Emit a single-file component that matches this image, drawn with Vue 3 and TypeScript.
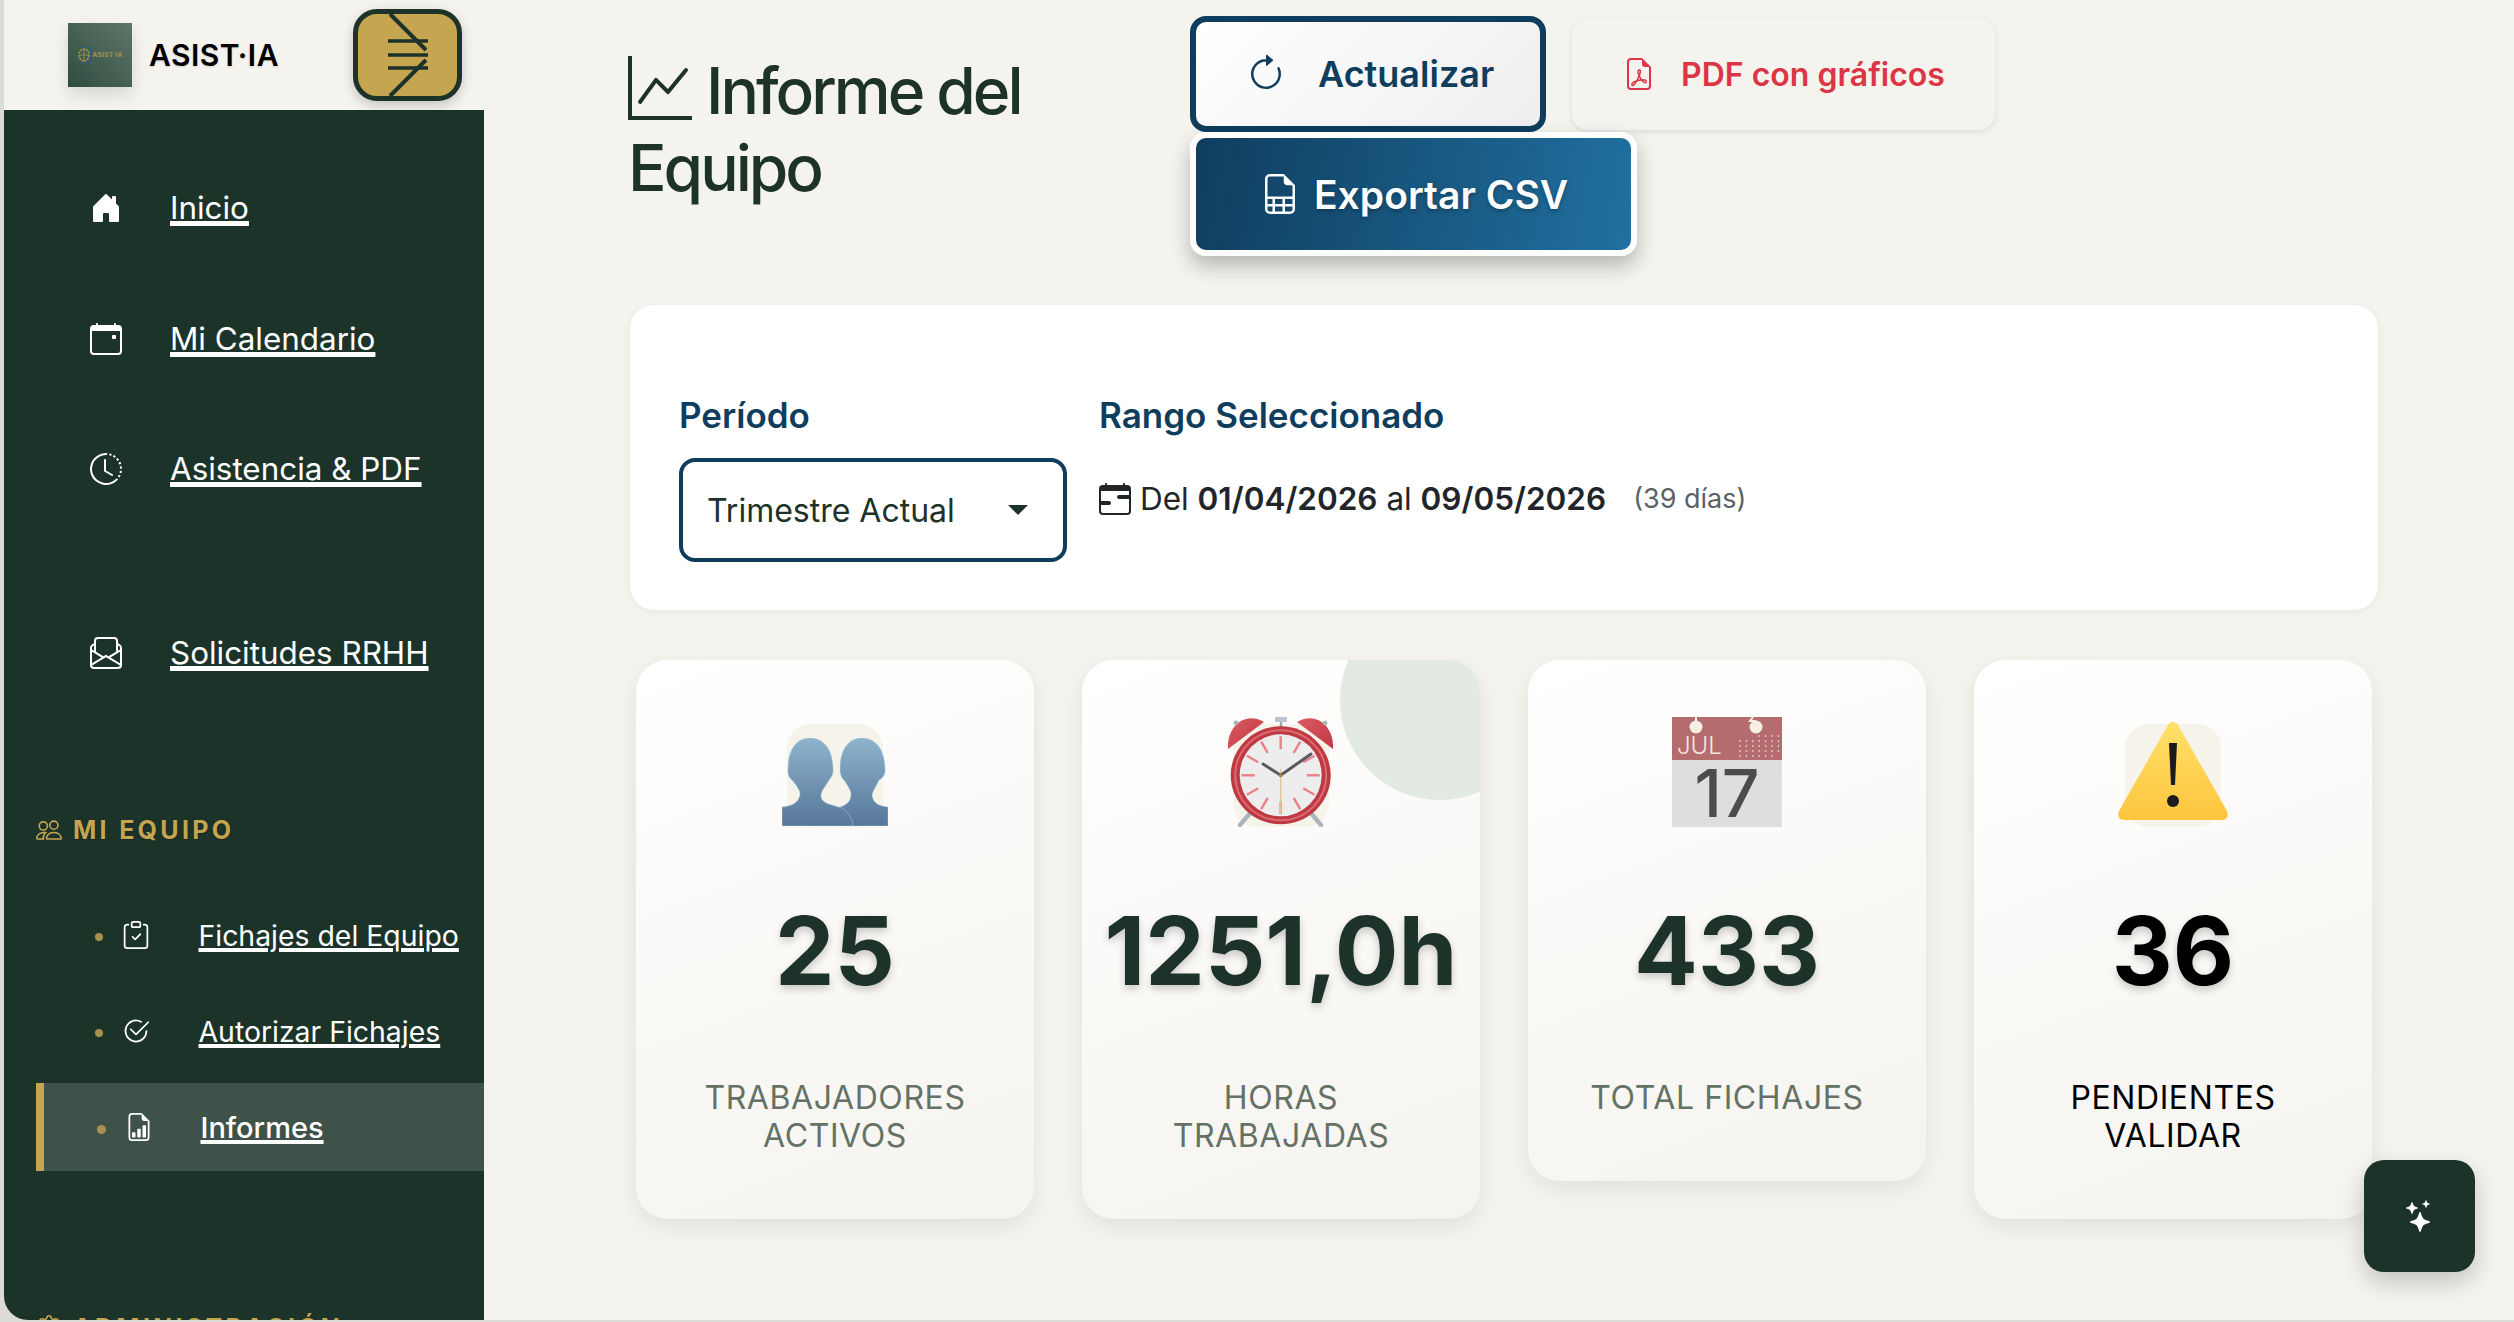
<script setup lang="ts">
const icons: Record<string, string> = {
  home: 'M6.5 14.5v-3.505c0-.245.25-.495.5-.495h2c.25 0 .5.25.5.5v3.5a.5.5 0 0 0 .5.5h4a.5.5 0 0 0 .5-.5v-7a.5.5 0 0 0-.146-.354L13 5.793V2.5a.5.5 0 0 0-.5-.5h-1a.5.5 0 0 0-.5.5v1.293L8.354 1.146a.5.5 0 0 0-.708 0l-6 6A.5.5 0 0 0 1.5 7.5v7a.5.5 0 0 0 .5.5h4a.5.5 0 0 0 .5-.5',
  calendar: 'M11 6.5a.5.5 0 0 1 .5-.5h1a.5.5 0 0 1 .5.5v1a.5.5 0 0 1-.5.5h-1a.5.5 0 0 1-.5-.5zM3.5 0a.5.5 0 0 1 .5.5V1h8V.5a.5.5 0 0 1 1 0V1h1a2 2 0 0 1 2 2v11a2 2 0 0 1-2 2H2a2 2 0 0 1-2-2V3a2 2 0 0 1 2-2h1V.5a.5.5 0 0 1 .5-.5M1 4v10a1 1 0 0 0 1 1h12a1 1 0 0 0 1-1V4z',
  clock: 'M8.515 1.019A7 7 0 0 0 8 1V0a8 8 0 0 1 .589.022zm2.004.45a7 7 0 0 0-.985-.299l.219-.976q.576.129 1.126.342zm1.37.71a7 7 0 0 0-.439-.27l.493-.87a8 8 0 0 1 .979.654l-.615.789a7 7 0 0 0-.418-.302zm1.834 1.79a7 7 0 0 0-.653-.796l.724-.69q.406.429.747.91zm.744 1.352a7 7 0 0 0-.214-.468l.893-.45a8 8 0 0 1 .45 1.088l-.95.313a7 7 0 0 0-.179-.483m.53 2.507a7 7 0 0 0-.1-1.025l.985-.17q.1.58.116 1.17zm-.131 1.538q.05-.254.081-.51l.993.123a8 8 0 0 1-.23 1.155l-.964-.267q.069-.247.12-.501m-.952 2.379q.276-.436.486-.908l.914.405q-.24.54-.555 1.038zm-.964 1.205q.183-.183.35-.378l.758.653a8 8 0 0 1-.401.432zM8 1a7 7 0 1 0 4.95 11.95l.707.707A8.001 8.001 0 1 1 8 0zM7.5 3a.5.5 0 0 1 .5.5v5.21l3.248 1.856a.5.5 0 0 1-.496.868l-3.5-2A.5.5 0 0 1 7 9V3.5a.5.5 0 0 1 .5-.5',
  envelope: 'M4 0a2 2 0 0 0-2 2v1.133l-.941.502A2 2 0 0 0 0 5.4V14a2 2 0 0 0 2 2h12a2 2 0 0 0 2-2V5.4a2 2 0 0 0-1.059-1.765L14 3.133V2a2 2 0 0 0-2-2zm10 4.267.47.25A1 1 0 0 1 15 5.4v.817l-1 .6zm-1 3.15-3.75 2.25L8 8.917l-1.25.75L3 7.417V2a1 1 0 0 1 1-1h8a1 1 0 0 1 1 1zm-11-.6-1-.6V5.4a1 1 0 0 1 .53-.882L2 4.267zm13 .566v5.734l-4.778-2.867zm-.035 6.88A1 1 0 0 1 14 15H2a1 1 0 0 1-.965-.738L8 10.083zM1 13.116V7.383l4.778 2.867L1 13.117Z',
  people: 'M15 14s1 0 1-1-1-4-5-4-5 3-5 4 1 1 1 1zm-7.978-1L7 12.996c.001-.264.167-1.03.76-1.72C8.312 10.629 9.282 10 11 10c1.717 0 2.687.63 3.24 1.276.593.69.758 1.457.76 1.72l-.008.002-.014.002zM11 7a2 2 0 1 0 0-4 2 2 0 0 0 0 4m3-2a3 3 0 1 1-6 0 3 3 0 0 1 6 0M6.936 9.28a6 6 0 0 0-1.23-.247A7 7 0 0 0 5 9c-4 0-5 3-5 4q0 1 1 1h4.216A2.24 2.24 0 0 1 5 13c0-1.01.377-2.042 1.09-2.904.243-.294.526-.569.846-.816M4.92 10A5.5 5.5 0 0 0 4 13H1c0-.26.164-1.03.76-1.724.545-.636 1.492-1.256 3.16-1.275ZM1.5 5.5a3 3 0 1 1 6 0 3 3 0 0 1-6 0m3-2a2 2 0 1 0 0 4 2 2 0 0 0 0-4',
  clipboard: 'M10.854 7.146a.5.5 0 0 1 0 .708l-3 3a.5.5 0 0 1-.708 0l-1.5-1.5a.5.5 0 1 1 .708-.708L7.5 9.793l2.646-2.647a.5.5 0 0 1 .708 0M4 1.5H3a2 2 0 0 0-2 2V14a2 2 0 0 0 2 2h10a2 2 0 0 0 2-2V3.5a2 2 0 0 0-2-2h-1v1h1a1 1 0 0 1 1 1V14a1 1 0 0 1-1 1H3a1 1 0 0 1-1-1V3.5a1 1 0 0 1 1-1h1zM9.5 1a.5.5 0 0 1 .5.5v1a.5.5 0 0 1-.5.5h-3a.5.5 0 0 1-.5-.5v-1a.5.5 0 0 1 .5-.5zm-3-1A1.5 1.5 0 0 0 5 1.5v1A1.5 1.5 0 0 0 6.5 4h3A1.5 1.5 0 0 0 11 2.5v-1A1.5 1.5 0 0 0 9.5 0z',
  check: 'M2.5 8a5.5 5.5 0 0 1 8.25-4.764.5.5 0 0 0 .5-.866A6.5 6.5 0 1 0 14.5 8a.5.5 0 0 0-1 0 5.5 5.5 0 1 1-11 0M15.354 3.354a.5.5 0 0 0-.708-.708L8 9.293 5.354 6.646a.5.5 0 1 0-.708.708l3 3a.5.5 0 0 0 .708 0z',
  report: 'M10 13.5a.5.5 0 0 0 .5.5h1a.5.5 0 0 0 .5-.5v-6a.5.5 0 0 0-.5-.5h-1a.5.5 0 0 0-.5.5zm-2.5.5a.5.5 0 0 1-.5-.5v-4a.5.5 0 0 1 .5-.5h1a.5.5 0 0 1 .5.5v4a.5.5 0 0 1-.5.5zm-3 0a.5.5 0 0 1-.5-.5v-2a.5.5 0 0 1 .5-.5h1a.5.5 0 0 1 .5.5v2a.5.5 0 0 1-.5.5zM14 14V4.5L9.5 0H4a2 2 0 0 0-2 2v12a2 2 0 0 0 2 2h8a2 2 0 0 0 2-2M9.5 3A1.5 1.5 0 0 0 11 4.5h2V14a1 1 0 0 1-1 1H4a1 1 0 0 1-1-1V2a1 1 0 0 1 1-1h5.5z',
  graph: 'M0 0h1v15h15v1H0zm14.817 3.113a.5.5 0 0 1 .07.704l-4.5 5.5a.5.5 0 0 1-.74.037L7.06 6.767l-3.656 5.027a.5.5 0 0 1-.808-.588l4-5.5a.5.5 0 0 1 .758-.06l2.609 2.61 4.15-5.073a.5.5 0 0 1 .704-.07',
  refresh: 'M8 3a5 5 0 1 0 4.546 2.914.5.5 0 0 1 .908-.417A6 6 0 1 1 8 2zM8 4.466V.534a.25.25 0 0 1 .41-.192l2.36 1.966c.12.1.12.284 0 .384L8.41 4.658A.25.25 0 0 1 8 4.466',
  pdf: 'M14 14V4.5L9.5 0H4a2 2 0 0 0-2 2v12a2 2 0 0 0 2 2h8a2 2 0 0 0 2-2M9.5 3A1.5 1.5 0 0 0 11 4.5h2V14a1 1 0 0 1-1 1H4a1 1 0 0 1-1-1V2a1 1 0 0 1 1-1h5.5zM4.603 14.087a.8.8 0 0 1-.438-.42c-.195-.388-.13-.776.08-1.102.198-.307.526-.568.897-.787a7.7 7.7 0 0 1 1.482-.645 20 20 0 0 0 1.062-2.227 7.3 7.3 0 0 1-.43-1.295c-.086-.4-.119-.796-.046-1.136.075-.354.274-.672.65-.823.192-.077.4-.12.602-.077a.7.7 0 0 1 .477.365c.088.164.12.356.127.538.007.188-.012.396-.047.614-.084.51-.27 1.134-.52 1.794a11 11 0 0 0 .98 1.686 5.8 5.8 0 0 1 1.334.05c.364.066.734.195.96.465.12.144.193.32.2.518.007.192-.047.382-.138.563a1.04 1.04 0 0 1-.354.416.86.86 0 0 1-.51.138c-.331-.014-.654-.196-.933-.417a5.7 5.7 0 0 1-.911-.95 11.7 11.7 0 0 0-1.997.406 11.3 11.3 0 0 1-1.02 1.51c-.292.35-.609.656-.927.787a.8.8 0 0 1-.58.029m1.379-1.901q-.25.115-.459.238c-.328.194-.541.383-.647.547-.094.145-.096.25-.04.361q.016.032.026.044l.035-.012c.137-.056.355-.235.635-.572a8 8 0 0 0 .45-.606m1.64-1.33a13 13 0 0 1 1.01-.193 12 12 0 0 1-.51-.858 21 21 0 0 1-.5 1.05zm2.446.45q.226.245.435.41c.24.19.407.253.498.256a.1.1 0 0 0 .07-.015.3.3 0 0 0 .094-.125.44.44 0 0 0 .059-.2.1.1 0 0 0-.026-.063c-.052-.062-.2-.152-.518-.209a4 4 0 0 0-.612-.053zM8.078 7.8a7 7 0 0 0 .2-.828q.046-.282.038-.465a.6.6 0 0 0-.032-.198.5.5 0 0 0-.145.04c-.087.035-.158.106-.196.283-.04.192-.03.469.046.822q.036.167.09.346z',
  sheet: 'M14 14V4.5L9.5 0H4a2 2 0 0 0-2 2v12a2 2 0 0 0 2 2h8a2 2 0 0 0 2-2M9.5 3A1.5 1.5 0 0 0 11 4.5h2V9H3V2a1 1 0 0 1 1-1h5.5zM3 12v-2h2v2zm0 1h2v2H4a1 1 0 0 1-1-1zm3 2v-2h3v2zm4 0v-2h3v1a1 1 0 0 1-1 1zm3-3h-3v-2h3zm-7 0v-2h3v2z',
  range: 'M9 7a1 1 0 0 1 1-1h5v2h-5a1 1 0 0 1-1-1M1 9h4a1 1 0 0 1 0 2H1zM3.5 0a.5.5 0 0 1 .5.5V1h8V.5a.5.5 0 0 1 1 0V1h1a2 2 0 0 1 2 2v11a2 2 0 0 1-2 2H2a2 2 0 0 1-2-2V3a2 2 0 0 1 2-2h1V.5a.5.5 0 0 1 .5-.5M1 4v10a1 1 0 0 0 1 1h12a1 1 0 0 0 1-1V4z',
  stars: 'M7.657 6.247c.11-.33.576-.33.686 0l.645 1.937a2.89 2.89 0 0 0 1.829 1.828l1.936.645c.33.11.33.576 0 .686l-1.937.645a2.89 2.89 0 0 0-1.828 1.829l-.645 1.936a.361.361 0 0 1-.686 0l-.645-1.937a2.89 2.89 0 0 0-1.828-1.828l-1.937-.645a.361.361 0 0 1 0-.686l1.937-.645a2.89 2.89 0 0 0 1.828-1.828zM3.794 1.148a.217.217 0 0 1 .412 0l.387 1.162c.173.518.579.924 1.097 1.097l1.162.387a.217.217 0 0 1 0 .412l-1.162.387A1.73 1.73 0 0 0 4.593 5.69l-.387 1.162a.217.217 0 0 1-.412 0L3.407 5.69A1.73 1.73 0 0 0 2.31 4.593l-1.162-.387a.217.217 0 0 1 0-.412l1.162-.387A1.73 1.73 0 0 0 3.407 2.31zM10.863.099a.145.145 0 0 1 .274 0l.258.774c.115.346.386.617.732.732l.774.258a.145.145 0 0 1 0 .274l-.774.258a1.16 1.16 0 0 0-.732.732l-.258.774a.145.145 0 0 1-.274 0l-.258-.774a1.16 1.16 0 0 0-.732-.732L9.1 2.137a.145.145 0 0 1 0-.274l.774-.258c.346-.115.617-.386.732-.732z',
  gear: 'M8 4.754a3.246 3.246 0 1 0 0 6.492 3.246 3.246 0 0 0 0-6.492M5.754 8a2.246 2.246 0 1 1 4.492 0 2.246 2.246 0 0 1-4.492 0M9.796 1.343c-.527-1.79-3.065-1.79-3.592 0l-.094.319a.873.873 0 0 1-1.255.52l-.292-.16c-1.64-.892-3.433.902-2.54 2.541l.159.292a.873.873 0 0 1-.52 1.255l-.319.094c-1.79.527-1.79 3.065 0 3.592l.319.094a.873.873 0 0 1 .52 1.255l-.16.292c-.892 1.64.901 3.434 2.541 2.54l.292-.159a.873.873 0 0 1 1.255.52l.094.319c.527 1.79 3.065 1.79 3.592 0l.094-.319a.873.873 0 0 1 1.255-.52l.292.16c1.64.893 3.434-.902 2.54-2.541l-.159-.292a.873.873 0 0 1 .52-1.255l.319-.094c1.79-.527 1.79-3.065 0-3.592l-.319-.094a.873.873 0 0 1-.52-1.255l.16-.292c.893-1.64-.902-3.433-2.541-2.54l-.292.159a.873.873 0 0 1-1.255-.52zm-2.633.283c.246-.835 1.428-.835 1.674 0l.094.319a1.873 1.873 0 0 0 2.693 1.115l.291-.16c.764-.415 1.6.42 1.184 1.185l-.159.292a1.873 1.873 0 0 0 1.116 2.692l.318.094c.835.246.835 1.428 0 1.674l-.319.094a1.873 1.873 0 0 0-1.115 2.693l.16.291c.415.764-.42 1.6-1.185 1.184l-.291-.159a1.873 1.873 0 0 0-2.693 1.116l-.094.318c-.246.835-1.428.835-1.674 0l-.094-.319a1.873 1.873 0 0 0-2.692-1.115l-.292.16c-.764.415-1.6-.42-1.184-1.185l.159-.291A1.873 1.873 0 0 0 1.945 8.93l-.319-.094c-.835-.246-.835-1.428 0-1.674l.319-.094A1.873 1.873 0 0 0 3.06 4.377l-.16-.292c-.415-.764.42-1.6 1.185-1.184l.292.159a1.873 1.873 0 0 0 2.692-1.115z',
};

const mainNav = [
  { label: 'Inicio', icon: 'home' },
  { label: 'Mi Calendario', icon: 'calendar' },
  { label: 'Asistencia & PDF', icon: 'clock' },
  { label: 'Solicitudes RRHH', icon: 'envelope', spaced: true },
];

const teamNav = [
  { label: 'Fichajes del Equipo', icon: 'clipboard' },
  { label: 'Autorizar Fichajes', icon: 'check' },
  { label: 'Informes', icon: 'report', active: true },
];

const stats = [
  { kind: 'people', value: '25', label: 'TRABAJADORES ACTIVOS' },
  { kind: 'alarm', value: '1251,0h', label: 'HORAS TRABAJADAS' },
  { kind: 'cal', value: '433', label: 'TOTAL FICHAJES' },
  { kind: 'warn', value: '36', label: 'PENDIENTES VALIDAR', dark: true },
];

// clock face marks, one every 30 degrees
const ticks = Array.from({ length: 12 }, (_, i) => {
  const a = (i * Math.PI) / 6;
  return {
    x1: 52.7 + Math.sin(a) * 26,
    y1: 58.3 - Math.cos(a) * 26,
    x2: 52.7 + Math.sin(a) * 39,
    y2: 58.3 - Math.cos(a) * 39,
  };
});

// tiny month grid on the calendar sheet
const monthDots = Array.from({ length: 31 }, (_, i) => ({
  x: 68 + ((i + 3) % 7) * 6.4,
  y: 19 + Math.floor((i + 3) / 7) * 5,
}));
</script>

<template>
  <div class="page">
    <aside class="sidebar">
      <div class="brand">
        <div class="logo">
          <svg class="logo-brain" viewBox="0 0 14 16">
            <rect x="0.5" y="0.5" width="13" height="15" fill="none" stroke="#2e5a78" />
            <ellipse cx="7" cy="8" rx="5" ry="6" fill="none" stroke="#a8964f" stroke-width="1.6" stroke-dasharray="2 1" />
            <path d="M7 2v12M3 8h8" stroke="#a8964f" stroke-width="0.8" />
          </svg>
          <span class="logo-text">ASIST·IA</span>
        </div>
        <span class="brand-name">ASIST·IA</span>
        <button class="menu-btn" type="button" aria-label="Menú">
          <svg width="60" height="92" viewBox="0 0 60 92">
            <g stroke="#1d3229" stroke-width="3.4" fill="none">
              <path d="M10 32h40M10 46h40M10 59h40" />
              <path d="M12 5 48 41M48 51 12 87" stroke-width="4" />
            </g>
          </svg>
        </button>
      </div>

      <nav class="nav">
        <a
          v-for="item in mainNav"
          :key="item.label"
          href="#"
          class="nav-link"
          :class="{ spaced: item.spaced }"
        >
          <svg class="nav-icon" viewBox="0 0 16 16" fill="currentColor"><path :d="icons[item.icon]" /></svg>
          <span class="nav-text">{{ item.label }}</span>
        </a>

        <div class="section-title team">
          <svg class="section-icon" viewBox="0 0 16 16" fill="currentColor"><path :d="icons.people" /></svg>
          MI EQUIPO
        </div>
        <a
          v-for="item in teamNav"
          :key="item.label"
          href="#"
          class="sub-link"
          :class="{ active: item.active }"
        >
          <span class="dot"></span>
          <svg class="sub-icon" viewBox="0 0 16 16" fill="currentColor"><path :d="icons[item.icon]" /></svg>
          <span class="sub-text">{{ item.label }}</span>
        </a>

        <div class="section-title admin">
          <svg class="section-icon" viewBox="0 0 16 16" fill="currentColor"><path :d="icons.gear" /></svg>
          ADMINISTRACIÓN
        </div>
      </nav>
    </aside>

    <main class="main">
      <header class="top">
        <h1 class="title">
          <svg class="title-icon" viewBox="0 0 16 16" fill="currentColor"><path :d="icons.graph" /></svg>
          Informe del Equipo
        </h1>
        <div class="actions">
          <button class="btn btn-refresh" type="button">
            <svg class="btn-icon" viewBox="0 0 16 16" fill="currentColor"><path :d="icons.refresh" /></svg>
            Actualizar
          </button>
          <button class="btn btn-pdf" type="button">
            <svg class="btn-icon" viewBox="0 0 16 16" fill="currentColor"><path :d="icons.pdf" /></svg>
            PDF con gráficos
          </button>
          <button class="btn btn-csv" type="button">
            <svg class="btn-icon" viewBox="0 0 16 16" fill="currentColor"><path :d="icons.sheet" /></svg>
            Exportar CSV
          </button>
        </div>
      </header>

      <section class="filters">
        <div class="field">
          <label class="field-label">Período</label>
          <div class="select">
            <span>Trimestre Actual</span>
            <span class="caret"></span>
          </div>
        </div>
        <div class="field">
          <label class="field-label">Rango Seleccionado</label>
          <div class="range">
            <svg class="range-icon" viewBox="0 0 16 16" fill="currentColor"><path :d="icons.range" /></svg>
            <span>Del <strong>01/04/2026</strong> al <strong>09/05/2026</strong></span>
            <small>(39 días)</small>
          </div>
        </div>
      </section>

      <section class="stats">
        <article
          v-for="stat in stats"
          :key="stat.kind"
          class="stat"
          :class="{ dark: stat.dark, deco: stat.kind === 'alarm' }"
        >
          <div class="stat-icon">
            <span class="tile"></span>

            <svg v-if="stat.kind === 'people'" class="emoji people" viewBox="0 0 106 88">
              <defs>
                <linearGradient id="skin" x1="0" y1="0" x2="0" y2="1">
                  <stop offset="0" stop-color="#8fb3cd" />
                  <stop offset="1" stop-color="#567799" />
                </linearGradient>
              </defs>
              <path
                d="M58 88V69C64 67 69 64 69 56 69 52 65 47 62 42 60 41 58 36 58 31 58 12 66 0 80 0 94 0 103 12 103 31 104 36 100 41 97 42 95 47 91 52 90 57 91 66 98 68 106 69V88Z"
                fill="url(#skin)"
                stroke="#a9cfe2"
                stroke-width="0.5"
              />
              <path
                d="M0 88V69C8 68 17 66 18 56 18 52 14 47 10 42 8 41 5 36 6 31 6 12 14 0 28 0 42 0 51 12 51 31 52 36 48 41 47 42 45 47 39 52 39 58 39 66 52 67 60 70 66 74 71 81 71 88Z"
                fill="url(#skin)"
                stroke="#a9cfe2"
                stroke-width="0.5"
              />
            </svg>

            <svg v-else-if="stat.kind === 'alarm'" class="emoji alarm" viewBox="0 0 106 110">
              <defs>
                <linearGradient id="bell" x1="0" y1="0" x2="1" y2="1">
                  <stop offset="0" stop-color="#de5a62" />
                  <stop offset="1" stop-color="#bd3a44" />
                </linearGradient>
              </defs>
              <path d="M0 32C-1 18 6 5 18 2 24 0 31 2 36 5Z" fill="url(#bell)" />
              <path d="M105 32C106 18 99 5 87 2 81 0 74 2 69 5Z" fill="url(#bell)" />
              <circle cx="8" cy="6" r="2.4" fill="#a9b3ba" />
              <circle cx="97" cy="6" r="2.4" fill="#a9b3ba" />
              <path d="M53 4V14" stroke="#9aa5ad" stroke-width="2.4" />
              <rect x="47" y="0" width="12" height="5" rx="1" fill="#b9c4cc" />
              <path d="M23 95 12 108M82 95 93 108" stroke="#aab4bb" stroke-width="4.4" stroke-linecap="round" />
              <ellipse cx="52.7" cy="58.3" rx="50" ry="49" fill="#bf3942" />
              <ellipse cx="52.7" cy="58.3" rx="45.5" ry="45" fill="none" stroke="#dc6a72" stroke-width="2" />
              <circle cx="52.7" cy="58.3" r="41" fill="#ededee" />
              <line
                v-for="(t, i) in ticks"
                :key="i"
                :x1="t.x1"
                :y1="t.y1"
                :x2="t.x2"
                :y2="t.y2"
                stroke="#ea8088"
                stroke-width="2.4"
              />
              <path d="M52.7 52V97" stroke="#e2c79a" stroke-width="1.4" />
              <path d="M35 47 52.7 58.3 83 37" fill="none" stroke="#58595c" stroke-width="3" stroke-linecap="round" />
              <circle cx="52.7" cy="58.3" r="2" fill="#a08050" />
            </svg>

            <svg v-else-if="stat.kind === 'cal'" class="emoji cal" viewBox="0 0 110 110">
              <rect x="0" y="42" width="110" height="68" fill="#dedede" />
              <rect x="0" y="0" width="110" height="43" fill="#b56c6e" />
              <circle cx="24" cy="10" r="6.5" fill="#f5f0e4" />
              <circle cx="84" cy="10" r="6.5" fill="#f5f0e4" />
              <path d="M24 0V5M81 0 78 4 84 4" stroke="#f5f0e4" stroke-width="2" fill="none" />
              <text x="5" y="37" class="cal-month">JUL</text>
              <circle v-for="(d, i) in monthDots" :key="i" :cx="d.x" :cy="d.y" r="0.9" fill="#e6c6c6" />
              <text x="55" y="100" class="cal-day" text-anchor="middle">17</text>
            </svg>

            <svg v-else class="emoji warn" viewBox="0 0 112 99">
              <defs>
                <linearGradient id="amber" x1="0" y1="0" x2="0" y2="1">
                  <stop offset="0" stop-color="#ffe06a" />
                  <stop offset="1" stop-color="#fdc53e" />
                </linearGradient>
              </defs>
              <path d="M51 4C53 0 59 0 61 4L110 90C112 95 110 99 105 99H7C2 99 0 95 2 90Z" fill="url(#amber)" />
              <path d="M52 22H60L58 64H54Z" fill="#1c1c1c" />
              <circle cx="56" cy="80" r="6" fill="#1c1c1c" />
            </svg>
          </div>
          <div class="stat-value">{{ stat.value }}</div>
          <div class="stat-label">{{ stat.label }}</div>
        </article>
      </section>

      <button class="fab" type="button" aria-label="Asistente">
        <svg class="fab-icon" viewBox="0 0 16 16" fill="currentColor"><path :d="icons.stars" /></svg>
      </button>
    </main>
  </div>
</template>

<style>
html,
body {
  margin: 0;
  background: #dcdbd6;
}
</style>

<style scoped>
.page {
  display: flex;
  height: 1320px;
  padding-left: 4px;
  overflow: hidden;
  font-family: Inter, "Liberation Sans", sans-serif;
  background: #dcdbd6;
}

.sidebar {
  flex: none;
  width: 480px;
  height: 1320px;
  overflow: hidden;
  background: #1c332a;
  border-bottom-left-radius: 24px;
}

.brand {
  display: flex;
  align-items: center;
  height: 110px;
  padding: 0 22px 0 64px;
  background: #f5f3ee;
  box-sizing: border-box;
}

.logo {
  display: flex;
  align-items: center;
  justify-content: center;
  gap: 1px;
  flex: none;
  width: 64px;
  height: 64px;
  background: linear-gradient(45deg, #2f4c40, #5f7669);
  box-shadow: 0 8px 16px rgba(0, 0, 0, 0.12);
}

.logo-brain {
  width: 14px;
  height: 16px;
}

.logo-text {
  font-size: 6.5px;
  font-weight: 700;
  color: #a8964f;
  letter-spacing: 0.3px;
}

.brand-name {
  margin-left: 17px;
  font-size: 30px;
  font-weight: 600;
  letter-spacing: 0.5px;
  color: #000;
  text-shadow: 0 1px 2px rgba(0, 0, 0, 0.15);
}

.menu-btn {
  display: flex;
  align-items: center;
  justify-content: center;
  margin-left: auto;
  width: 109px;
  height: 92px;
  padding: 0;
  background: #c5a550;
  border: 5px solid #1c332a;
  border-radius: 24px;
  box-shadow: 0 4px 12px rgba(0, 0, 0, 0.2);
  box-sizing: border-box;
}

.menu-btn svg {
  flex: none;
}

.nav {
  display: flex;
  flex-direction: column;
  padding-top: 33px;
}

.nav-link {
  display: flex;
  align-items: center;
  gap: 48px;
  height: 130.5px;
  padding-left: 86px;
  color: #fff;
}

.nav-link.spaced {
  margin-top: 53px;
}

.nav-icon {
  flex: none;
  width: 32px;
  height: 32px;
}

.nav-text {
  font-size: 31.4px;
  text-decoration: underline;
  text-underline-offset: 4px;
}

.section-title {
  display: flex;
  align-items: center;
  gap: 11px;
  height: 40px;
  margin-left: 32px;
  font-size: 25px;
  font-weight: 700;
  letter-spacing: 3.3px;
  color: #c5a550;
  text-shadow: 0 1px 2px rgba(0, 0, 0, 0.3);
}

.section-title.team {
  margin-top: 92px;
  margin-bottom: 41px;
}

.section-title.admin {
  margin-top: 137px;
}

.section-icon {
  flex: none;
  width: 26px;
  height: 26px;
}

.sub-link {
  display: flex;
  align-items: center;
  height: 88px;
  margin: 0 0 8px 32px;
  padding-left: 59px;
  color: #fff;
  box-sizing: border-box;
}

.sub-link.active {
  margin-bottom: 0;
  padding-left: 53px;
  background: #3f524a;
  border-left: 8px solid #c5a550;
}

.dot {
  flex: none;
  width: 8px;
  height: 8px;
  margin-top: 4px;
  border-radius: 50%;
  background: #a89050;
}

.sub-link.active .dot {
  width: 9px;
  height: 9px;
}

.sub-icon {
  flex: none;
  width: 28px;
  height: 28px;
  margin-left: 19px;
}

.sub-text {
  margin-left: 48.5px;
  font-size: 28.4px;
  white-space: nowrap;
  text-decoration: underline;
  text-underline-offset: 4px;
}

.sub-link.active .sub-text {
  margin-left: 47.5px;
  font-size: 29px;
  font-weight: 500;
}

.main {
  position: relative;
  flex: 1;
  min-width: 0;
  height: 1320px;
  padding: 16px 136px 0 146px;
  background: #f5f3ee;
  box-sizing: border-box;
}

.top {
  display: flex;
  height: 289px;
}

.title {
  flex: none;
  width: 560px;
  margin: 36px 0 0 -2px;
  font-size: 64px;
  font-weight: 500;
  line-height: 77px;
  letter-spacing: -3px;
  color: #1d3229;
}

.title-icon {
  width: 64px;
  height: 64px;
  vertical-align: -6px;
}

.actions {
  display: flex;
  flex-wrap: wrap;
  align-items: flex-start;
  align-content: flex-start;
  column-gap: 26px;
  width: 810px;
  margin-left: 2px;
}

.btn {
  display: flex;
  align-items: center;
  font-family: inherit;
  font-weight: 600;
  border-radius: 16px;
  box-sizing: border-box;
}

.btn-icon {
  flex: none;
}

.btn-refresh {
  gap: 32px;
  width: 356px;
  height: 116px;
  padding: 0 0 0 50px;
  font-size: 36px;
  color: #0f3d5e;
  background: linear-gradient(135deg, #fff, #eeeeee);
  border: 6px solid #0f3d5e;
}

.btn-refresh .btn-icon {
  width: 40px;
  height: 40px;
}

.btn-pdf {
  gap: 26px;
  width: 423px;
  height: 112px;
  margin-top: 2px;
  padding: 0 0 0 51px;
  font-size: 32px;
  color: #dc3545;
  background: #f5f3ee;
  border: none;
  box-shadow: 0 2px 6px rgba(0, 0, 0, 0.1);
}

.btn-pdf .btn-icon {
  width: 32px;
  height: 32px;
}

.btn-csv {
  gap: 14px;
  width: 447px;
  height: 124px;
  padding: 0 0 0 64px;
  font-size: 39px;
  color: #fff;
  background: linear-gradient(100deg, #0f3d5e, #2070a0);
  border: 6px solid #fff;
  box-shadow: 0 10px 20px rgba(0, 0, 0, 0.25);
  text-shadow: 0 2px 4px rgba(0, 0, 0, 0.3);
}

.btn-csv .btn-icon {
  width: 40px;
  height: 40px;
}

.filters {
  display: flex;
  gap: 32px;
  height: 305px;
  padding: 0 49px;
  background: #fff;
  border-radius: 24px;
  box-shadow: 0 2px 8px rgba(0, 0, 0, 0.06);
  box-sizing: border-box;
}

.field {
  padding-top: 88px;
}

.field-label {
  display: block;
  font-size: 35px;
  font-weight: 600;
  line-height: 44px;
  color: #0f3d5e;
}

.select {
  display: flex;
  align-items: center;
  justify-content: space-between;
  width: 388px;
  height: 104px;
  margin-top: 21px;
  padding: 0 35px 0 24px;
  font-size: 32px;
  color: #1d3229;
  border: 4px solid #0f3d5e;
  border-radius: 16px;
  box-sizing: border-box;
}

.caret {
  width: 0;
  height: 0;
  border-left: 10px solid transparent;
  border-right: 10px solid transparent;
  border-top: 10px solid #1d3229;
}

.range {
  display: flex;
  align-items: center;
  gap: 9px;
  margin-top: 42px;
  font-size: 31.5px;
  color: #212529;
}

.range strong {
  font-weight: 600;
}

.range small {
  margin-left: 18px;
  font-size: 27px;
  color: #5c6166;
}

.range-icon {
  flex: none;
  width: 32px;
  height: 32px;
}

.stats {
  display: grid;
  grid-template-columns: repeat(4, 1fr);
  align-items: start;
  gap: 48px;
  margin: 50px 6px 0;
}

.stat {
  position: relative;
  padding: 57px 16px 64px;
  overflow: hidden;
  text-align: center;
  background: linear-gradient(160deg, #fff, #f5f3ee);
  border-radius: 32px;
  box-shadow: 0 8px 24px rgba(0, 0, 0, 0.08);
  color: #1d3229;
}

.stat.deco::before {
  content: "";
  position: absolute;
  top: -60px;
  right: -60px;
  width: 200px;
  height: 200px;
  border-radius: 50%;
  background: #e3e9e3;
}

.stat-icon {
  position: relative;
  height: 110px;
}

.tile {
  position: absolute;
  top: 7px;
  left: 50%;
  width: 96px;
  height: 103px;
  margin-left: -48px;
  background: #f6f3ea;
  border-radius: 24px;
}

.emoji {
  position: absolute;
  left: 50%;
}

.emoji.people {
  top: 21px;
  width: 106px;
  height: 88px;
  margin-left: -53px;
}

.emoji.alarm {
  top: 0;
  width: 106px;
  height: 110px;
  margin-left: -53px;
}

.emoji.cal {
  top: 0;
  width: 110px;
  height: 110px;
  margin-left: -55px;
}

.emoji.warn {
  top: 4px;
  width: 112px;
  height: 99px;
  margin-left: -56px;
}

.cal-month {
  font-family: Inter, "Liberation Sans", sans-serif;
  font-size: 24px;
  font-weight: 300;
  fill: #f1e6e2;
}

.cal-day {
  font-family: Inter, "Liberation Sans", sans-serif;
  font-size: 66px;
  font-weight: 500;
  fill: #4c4c4c;
}

.stat-value {
  position: relative;
  margin-top: 66px;
  font-size: 94.5px;
  font-weight: 700;
  line-height: 116px;
  text-shadow: 0 4px 8px rgba(0, 0, 0, 0.2);
  white-space: nowrap;
}

.stat-label {
  margin: 70px 24px 0;
  font-size: 32px;
  line-height: 38px;
  letter-spacing: 0.6px;
  color: #647266;
}

.stat.dark .stat-value,
.stat.dark .stat-label {
  color: #000;
}

.fab {
  position: absolute;
  top: 1160px;
  left: 1880px;
  display: flex;
  align-items: center;
  justify-content: center;
  width: 111px;
  height: 112px;
  color: #fff;
  background: #1c332a;
  border: none;
  border-radius: 20px;
  box-shadow: 0 10px 24px rgba(0, 0, 0, 0.2);
}

.fab-icon {
  width: 32px;
  height: 32px;
}
</style>
